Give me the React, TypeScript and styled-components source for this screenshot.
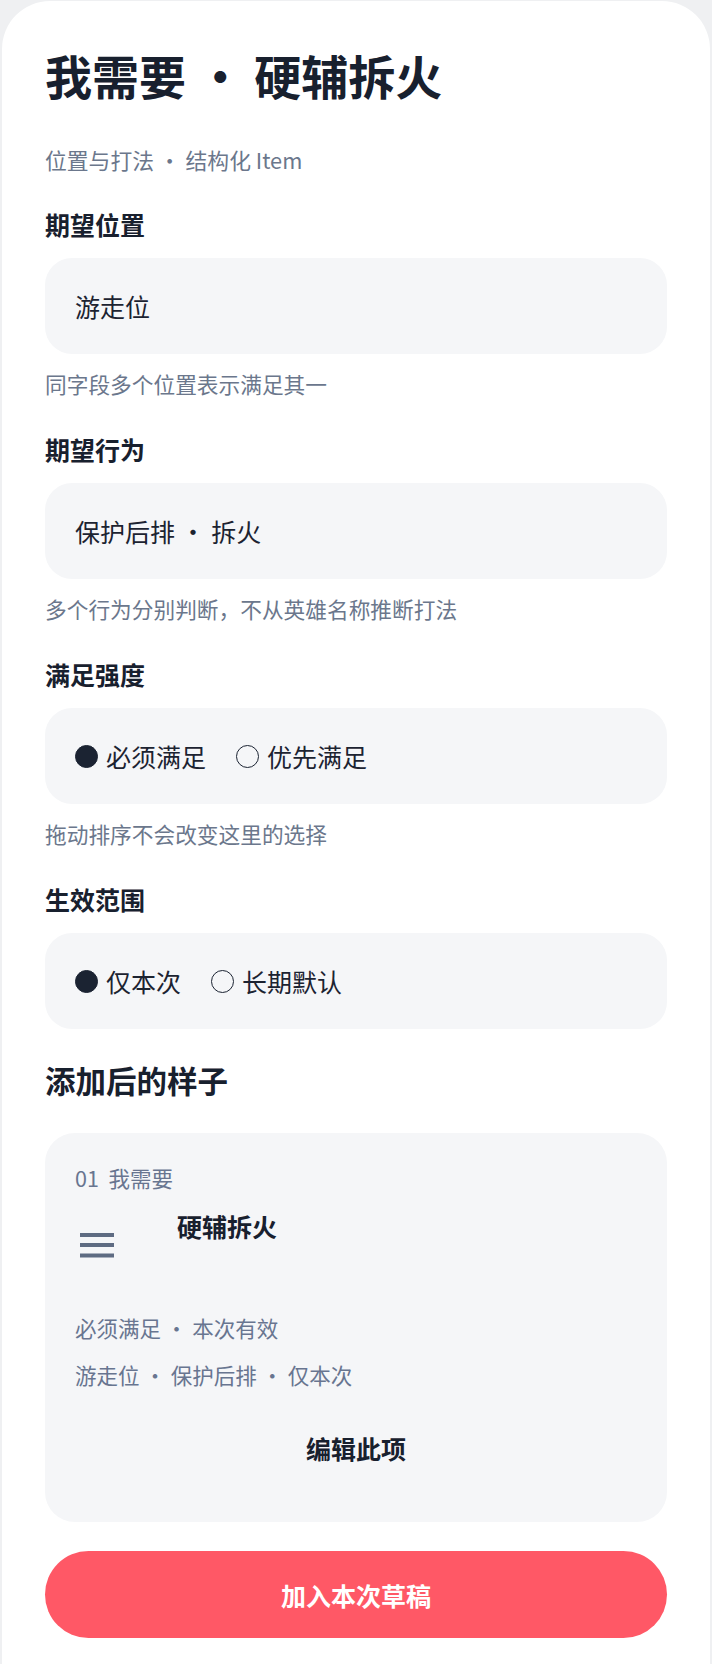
import styled, { createGlobalStyle } from 'styled-components';

const GlobalStyle = createGlobalStyle`
    html, body {
        margin: 0;
        background: #eff0f2;
    }
    body {
        font-family: "Noto Sans CJK SC", "Noto Sans", sans-serif;
        color: #18202e;
    }
    * {
        box-sizing: border-box;
    }
`;

const Page = styled.div`
    padding: 1px 2px 0 2px;
`;

const Sheet = styled.main`
    background: #ffffff;
    border-radius: 48px 48px 0 0;
    padding: 44px 43px 40px;
    min-height: 1663px;
`;

const Title = styled.h1`
    margin: 0;
    font-size: 47px;
    line-height: 60px;
    font-weight: 700;
    color: #18202e;
`;

const Subtitle = styled.p`
    margin: 39px 0 0;
    font-size: 21.8px;
    line-height: 32px;
    color: #6b778c;
`;

const Field = styled.section`
    margin-top: 31px;

    & + & {
        margin-top: 32px;
    }
`;

const Label = styled.h2`
    margin: 0;
    font-size: 25px;
    line-height: 34px;
    font-weight: 700;
    color: #18202e;
`;

const Box = styled.div`
    margin-top: 17px;
    height: 96px;
    border-radius: 27px;
    background: #f5f6f8;
    padding: 0 30px;
    display: flex;
    align-items: center;
    font-size: 25px;
    color: #1c2331;
`;

const Hint = styled.p`
    margin: 14px 0 0;
    font-size: 21.7px;
    line-height: 32px;
    color: #6b778c;
`;

const RadioGroup = styled.div`
    display: flex;
    align-items: center;
    gap: 30px;
`;

const Option = styled.label`
    display: flex;
    align-items: center;
    gap: 8px;
    font-size: 25px;
    color: #1c2331;
`;

const Dot = styled.span<{ $on: boolean }>`
    width: 23px;
    height: 23px;
    border-radius: 50%;
    background: ${props => props.$on ? '#1b2332' : 'transparent'};
    border: 1.5px solid #1b2332;
`;

const SectionTitle = styled.h2`
    margin: 30px 0 0;
    font-size: 30.5px;
    line-height: 42px;
    font-weight: 700;
    color: #18202e;
`;

const Preview = styled.div`
    margin-top: 32px;
    background: #f5f6f8;
    border-radius: 30px;
    padding: 29px 30px 57px;
`;

const Meta = styled.div<{ $gap?: number }>`
    margin-top: ${props => props.$gap ?? 0}px;
    font-size: 21.5px;
    line-height: 32px;
    color: #687590;
`;

const ItemRow = styled.div`
    margin-top: 15px;
    display: flex;
    align-items: flex-start;
    gap: 58px;
`;

const Handle = styled.span`
    width: 44px;
    height: 72px;
    display: flex;
    align-items: center;
    justify-content: center;
    color: #5e6b82;
`;

const ItemTitle = styled.div`
    font-size: 25px;
    line-height: 34px;
    font-weight: 700;
    color: #18202e;
`;

const EditButton = styled.button`
    display: block;
    margin: 40px auto 0;
    padding: 0;
    border: 0;
    background: none;
    font-family: inherit;
    font-size: 25px;
    line-height: 34px;
    font-weight: 700;
    color: #18202e;
`;

const Submit = styled.button`
    margin-top: 29px;
    width: 100%;
    height: 87px;
    border: 0;
    border-radius: 44px;
    background: #ff5866;
    color: #ffffff;
    font-family: inherit;
    font-size: 25px;
    font-weight: 700;
`;

function GripIcon() {
    return (
        <svg width="34" height="26" viewBox="0 0 34 26" fill="currentColor">
            <rect x="0" y="1" width="34" height="4" />
            <rect x="0" y="11" width="34" height="4" />
            <rect x="0" y="21.5" width="34" height="4" />
        </svg>
    );
}

interface IField {
    label: string;
    value?: string;
    options?: { text: string; on: boolean }[];
    hint?: string;
}

const fields: IField[] = [
    { label: '期望位置', value: '游走位', hint: '同字段多个位置表示满足其一' },
    { label: '期望行为', value: '保护后排 · 拆火', hint: '多个行为分别判断，不从英雄名称推断打法' },
    {
        label: '满足强度',
        options: [{ text: '必须满足', on: true }, { text: '优先满足', on: false }],
        hint: '拖动排序不会改变这里的选择',
    },
    {
        label: '生效范围',
        options: [{ text: '仅本次', on: true }, { text: '长期默认', on: false }],
    },
];

function App() {
    return (
        <>
            <GlobalStyle />
            <Page>
                <Sheet>
                    <Title>我需要 · 硬辅拆火</Title>
                    <Subtitle>位置与打法 · 结构化 Item</Subtitle>
                    {fields.map(field => (
                        <Field key={field.label}>
                            <Label>{field.label}</Label>
                            <Box>
                                {field.options ? (
                                    <RadioGroup>
                                        {field.options.map(opt => (
                                            <Option key={opt.text}>
                                                <Dot $on={opt.on} />
                                                {opt.text}
                                            </Option>
                                        ))}
                                    </RadioGroup>
                                ) : field.value}
                            </Box>
                            {field.hint && <Hint>{field.hint}</Hint>}
                        </Field>
                    ))}
                    <SectionTitle>添加后的样子</SectionTitle>
                    <Preview>
                        <Meta>01&nbsp;&nbsp;我需要</Meta>
                        <ItemRow>
                            <Handle><GripIcon /></Handle>
                            <ItemTitle>硬辅拆火</ItemTitle>
                        </ItemRow>
                        <Meta $gap={31}>必须满足 · 本次有效</Meta>
                        <Meta $gap={15}>游走位 · 保护后排 · 仅本次</Meta>
                        <EditButton>编辑此项</EditButton>
                    </Preview>
                    <Submit>加入本次草稿</Submit>
                </Sheet>
            </Page>
        </>
    );
}

export default App;
